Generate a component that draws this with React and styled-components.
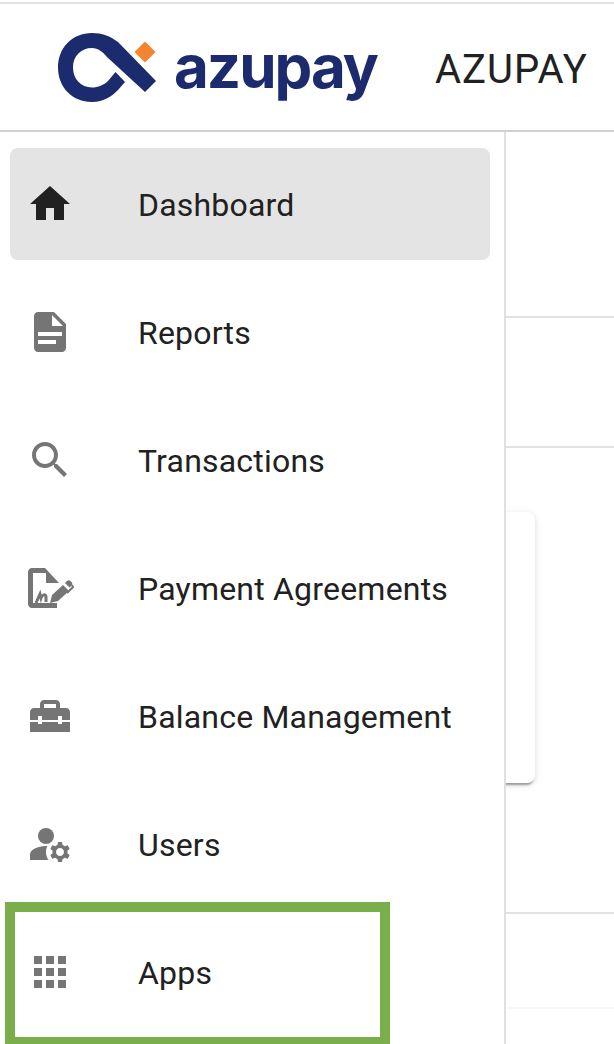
import React from 'react';
import styled, { createGlobalStyle } from 'styled-components';

const GlobalStyle = createGlobalStyle`
  html, body {
    margin: 0;
    padding: 0;
    background: #fff;
  }
  body {
    font-family: Roboto, "Liberation Sans", sans-serif;
    color: #212121;
  }
`;

const Page = styled.div`
  position: relative;
  width: 614px;
  height: 1044px;
  overflow: hidden;
  background: #fff;
  padding-top: 2px;
  box-sizing: border-box;
`;

const Header = styled.header`
  height: 130px;
  box-sizing: border-box;
  border-top: 2px solid #e2e2e2;
  border-bottom: 2px solid #d2d2d2;
  display: flex;
  align-items: center;
  padding-left: 58px;
`;

const Logo = styled.div`
  display: flex;
  align-items: center;
  width: 377px;
  flex: none;
  margin-top: 2px;
`;

const Wordmark = styled.span`
  font-family: Inter, sans-serif;
  font-weight: 700;
  font-size: 60px;
  line-height: 70px;
  letter-spacing: -2px;
  color: #1c2b6e;
  margin-left: 18px;
  margin-top: -4px;
`;

const Account = styled.span`
  font-size: 40px;
  line-height: 48px;
  letter-spacing: 1px;
  color: #212121;
  margin-top: 6px;
`;

const Body = styled.div`
  display: flex;
  height: 912px;
`;

const Sidebar = styled.nav`
  width: 506px;
  flex: none;
  box-sizing: border-box;
  border-right: 2px solid #e0e0e0;
  padding: 16px 14px 0 10px;
  display: flex;
  flex-direction: column;
  gap: 16px;
`;

const NavItem = styled.div`
  height: 112px;
  flex: none;
  display: flex;
  align-items: center;
  padding-left: 16px;
  border-radius: 8px;
  background: ${(p) => (p.$active ? '#e4e4e4' : 'transparent')};
`;

const IconSlot = styled.div`
  width: 112px;
  flex: none;
  display: flex;
  color: ${(p) => (p.$active ? '#212121' : '#757575')};
`;

const NavIcon = styled.svg`
  width: 48px;
  height: 48px;
  fill: currentColor;
`;

const NavLabel = styled.span`
  font-size: 32px;
  line-height: 48px;
  letter-spacing: 0.2px;
  color: #212121;
  margin-top: 2px;
`;

const Main = styled.main`
  flex: 1;
  min-width: 0;
  overflow: hidden;
  display: flex;
  flex-direction: column;
`;

const Band = styled.section`
  height: ${(p) => p.$height}px;
  flex: none;
  box-sizing: border-box;
  border-bottom: 2px solid ${(p) => p.$line || '#e2e2e2'};
`;

const Card = styled.div`
  width: 39px;
  height: 271px;
  margin: 64px 0 0 -10px;
  border-radius: 8px;
  background: #fff;
  box-shadow: 0 4px 2px -2px rgba(0, 0, 0, 0.3), 0 2px 4px rgba(0, 0, 0, 0.1), 0 2px 10px rgba(0, 0, 0, 0.08);
`;

const Highlight = styled.div`
  position: absolute;
  left: 5px;
  top: 902px;
  width: 385px;
  height: 145px;
  box-sizing: border-box;
  border: 10px solid #7aae4b;
`;

const icons = {
  dashboard: <path d="M10 20v-6h4v6h5v-8h3L12 3 2 12h3v8z" />,
  reports: (
    <path
      fillRule="evenodd"
      d="M14 2H6c-1.1 0-2 .9-2 2v16c0 1.1.9 2 2 2h12c1.1 0 2-.9 2-2V8l-6-6zM15 18H6v-2h9v2zm3-4H6v-2h12v2zm-5-5V3.5L18.5 9H13z"
    />
  ),
  transactions: (
    <path d="M15.5 14h-.79l-.28-.27C15.41 12.59 16 11.11 16 9.5 16 5.91 13.09 3 9.5 3S3 5.91 3 9.5 5.91 16 9.5 16c1.61 0 3.09-.59 4.23-1.57l.27.28v.79l5 4.99L20.49 19l-4.99-5zm-6 0C7.01 14 5 11.99 5 9.5S7.01 5 9.5 5 14 7.01 14 9.5 11.99 14 9.5 14z" />
  ),
  agreements: (
    <g transform="scale(0.5)">
      <path d="M6 4h13l14 15H20V9H7v30h24v5H6c-2.2 0-4-1.8-4-4V8c0-2.2 1.8-4 4-4z" />
      <path d="M10 39l4-9 1 4c1-3 5-5 5-1v5" fill="none" stroke="currentColor" strokeWidth="3" />
      <path d="M24 39l2-8L37 21l6 6L32 37z" />
      <path d="M39 19l2-2c1-1 2.500-1 3.500 0l1 1c1 1 1 2.500 0 3.500l-2 2z" />
      <path d="M46 21l1 2-6 6" fill="none" stroke="currentColor" strokeWidth="2" />
    </g>
  ),
  balance: (
    <path d="M18 16h-2v-1H8v1H6v-1H2v5h20v-5h-4zm2-8h-3V6c0-1.1-.9-2-2-2H9c-1.1 0-2 .9-2 2v2H4c-1.1 0-2 .9-2 2v4h4v-2h2v2h8v-2h2v2h4v-4c0-1.1-.9-2-2-2zm-5 0H9V6h6v2z" />
  ),
  users: (
    <>
      <circle cx="10" cy="8" r="4" />
      <path d="M10.67 13.02c-.22-.01-.44-.02-.67-.02-2.42 0-4.68.67-6.61 1.82-.88.52-1.39 1.5-1.39 2.530V20h9.260c-.79-1.130-1.260-2.510-1.260-4 0-1.070.25-2.070.67-2.980z" />
      <path d="M20.750 16c0-.22-.03-.42-.06-.63l1.140-1.010-1-1.730-1.450.49c-.32-.27-.68-.48-1.080-.63L18 11h-2l-.3 1.490c-.4.15-.76.36-1.080.63l-1.450-.49-1 1.730 1.140 1.010c-.03.21-.06.41-.06.63s.03.42.06.63l-1.140 1.010 1 1.730 1.450-.49c.32.27.68.48 1.080.63L16 21h2l.3-1.490c.4-.15.76-.36 1.080-.63l1.450.49 1-1.730-1.140-1.010c.03-.21.06-.41.06-.63zM17 18c-1.100 0-2-.9-2-2s.9-2 2-2 2 .9 2 2-.9 2-2 2z" />
    </>
  ),
  apps: (
    <path d="M4 8h4V4H4v4zm6 12h4v-4h-4v4zm-6 0h4v-4H4v4zm0-6h4v-4H4v4zm6 0h4v-4h-4v4zm6-10v4h4V4h-4zm-6 4h4V4h-4v4zm6 6h4v-4h-4v4zm0 6h4v-4h-4v4z" />
  ),
};

const navItems = [
  { key: 'dashboard', label: 'Dashboard', active: true },
  { key: 'reports', label: 'Reports' },
  { key: 'transactions', label: 'Transactions' },
  { key: 'agreements', label: 'Payment Agreements' },
  { key: 'balance', label: 'Balance Management' },
  { key: 'users', label: 'Users' },
  { key: 'apps', label: 'Apps' },
];

const LogoMark = () => (
  <svg width="98" height="70" viewBox="58 33 98 70" style={{ flex: 'none' }}>
    <path
      fill="#1c2b6e"
      d="M156 81 118 42C110 36 102 33 92 33 72 33 58 48 58 67.500 58 87 72 102 92 102 104 102 112 96 118 90L125 82 115.500 72 108 81C104 85 98 87.500 92 87.500 81 87.500 73 79 73 67.500 73 56 81 48 92 48 98 48 103 52 107 57L145 92Z"
    />
    <path fill="#f58430" d="M145 41.500 155.500 52 145 62.500 134.500 52Z" />
  </svg>
);

const App = () => (
  <Page>
    <GlobalStyle />
    <Header>
      <Logo>
        <LogoMark />
        <Wordmark>azupay</Wordmark>
      </Logo>
      <Account>AZUPAY</Account>
    </Header>
    <Body>
      <Sidebar>
        {navItems.map((item) => (
          <NavItem key={item.key} $active={item.active}>
            <IconSlot $active={item.active}>
              <NavIcon viewBox="0 0 24 24">{icons[item.key]}</NavIcon>
            </IconSlot>
            <NavLabel>{item.label}</NavLabel>
          </NavItem>
        ))}
      </Sidebar>
      <Main>
        <Band $height={186} />
        <Band $height={130} />
        <Band $height={466}>
          <Card />
        </Band>
        <Band $height={95} $line="#f8f8f8" />
      </Main>
    </Body>
    <Highlight />
  </Page>
);

export default App;
